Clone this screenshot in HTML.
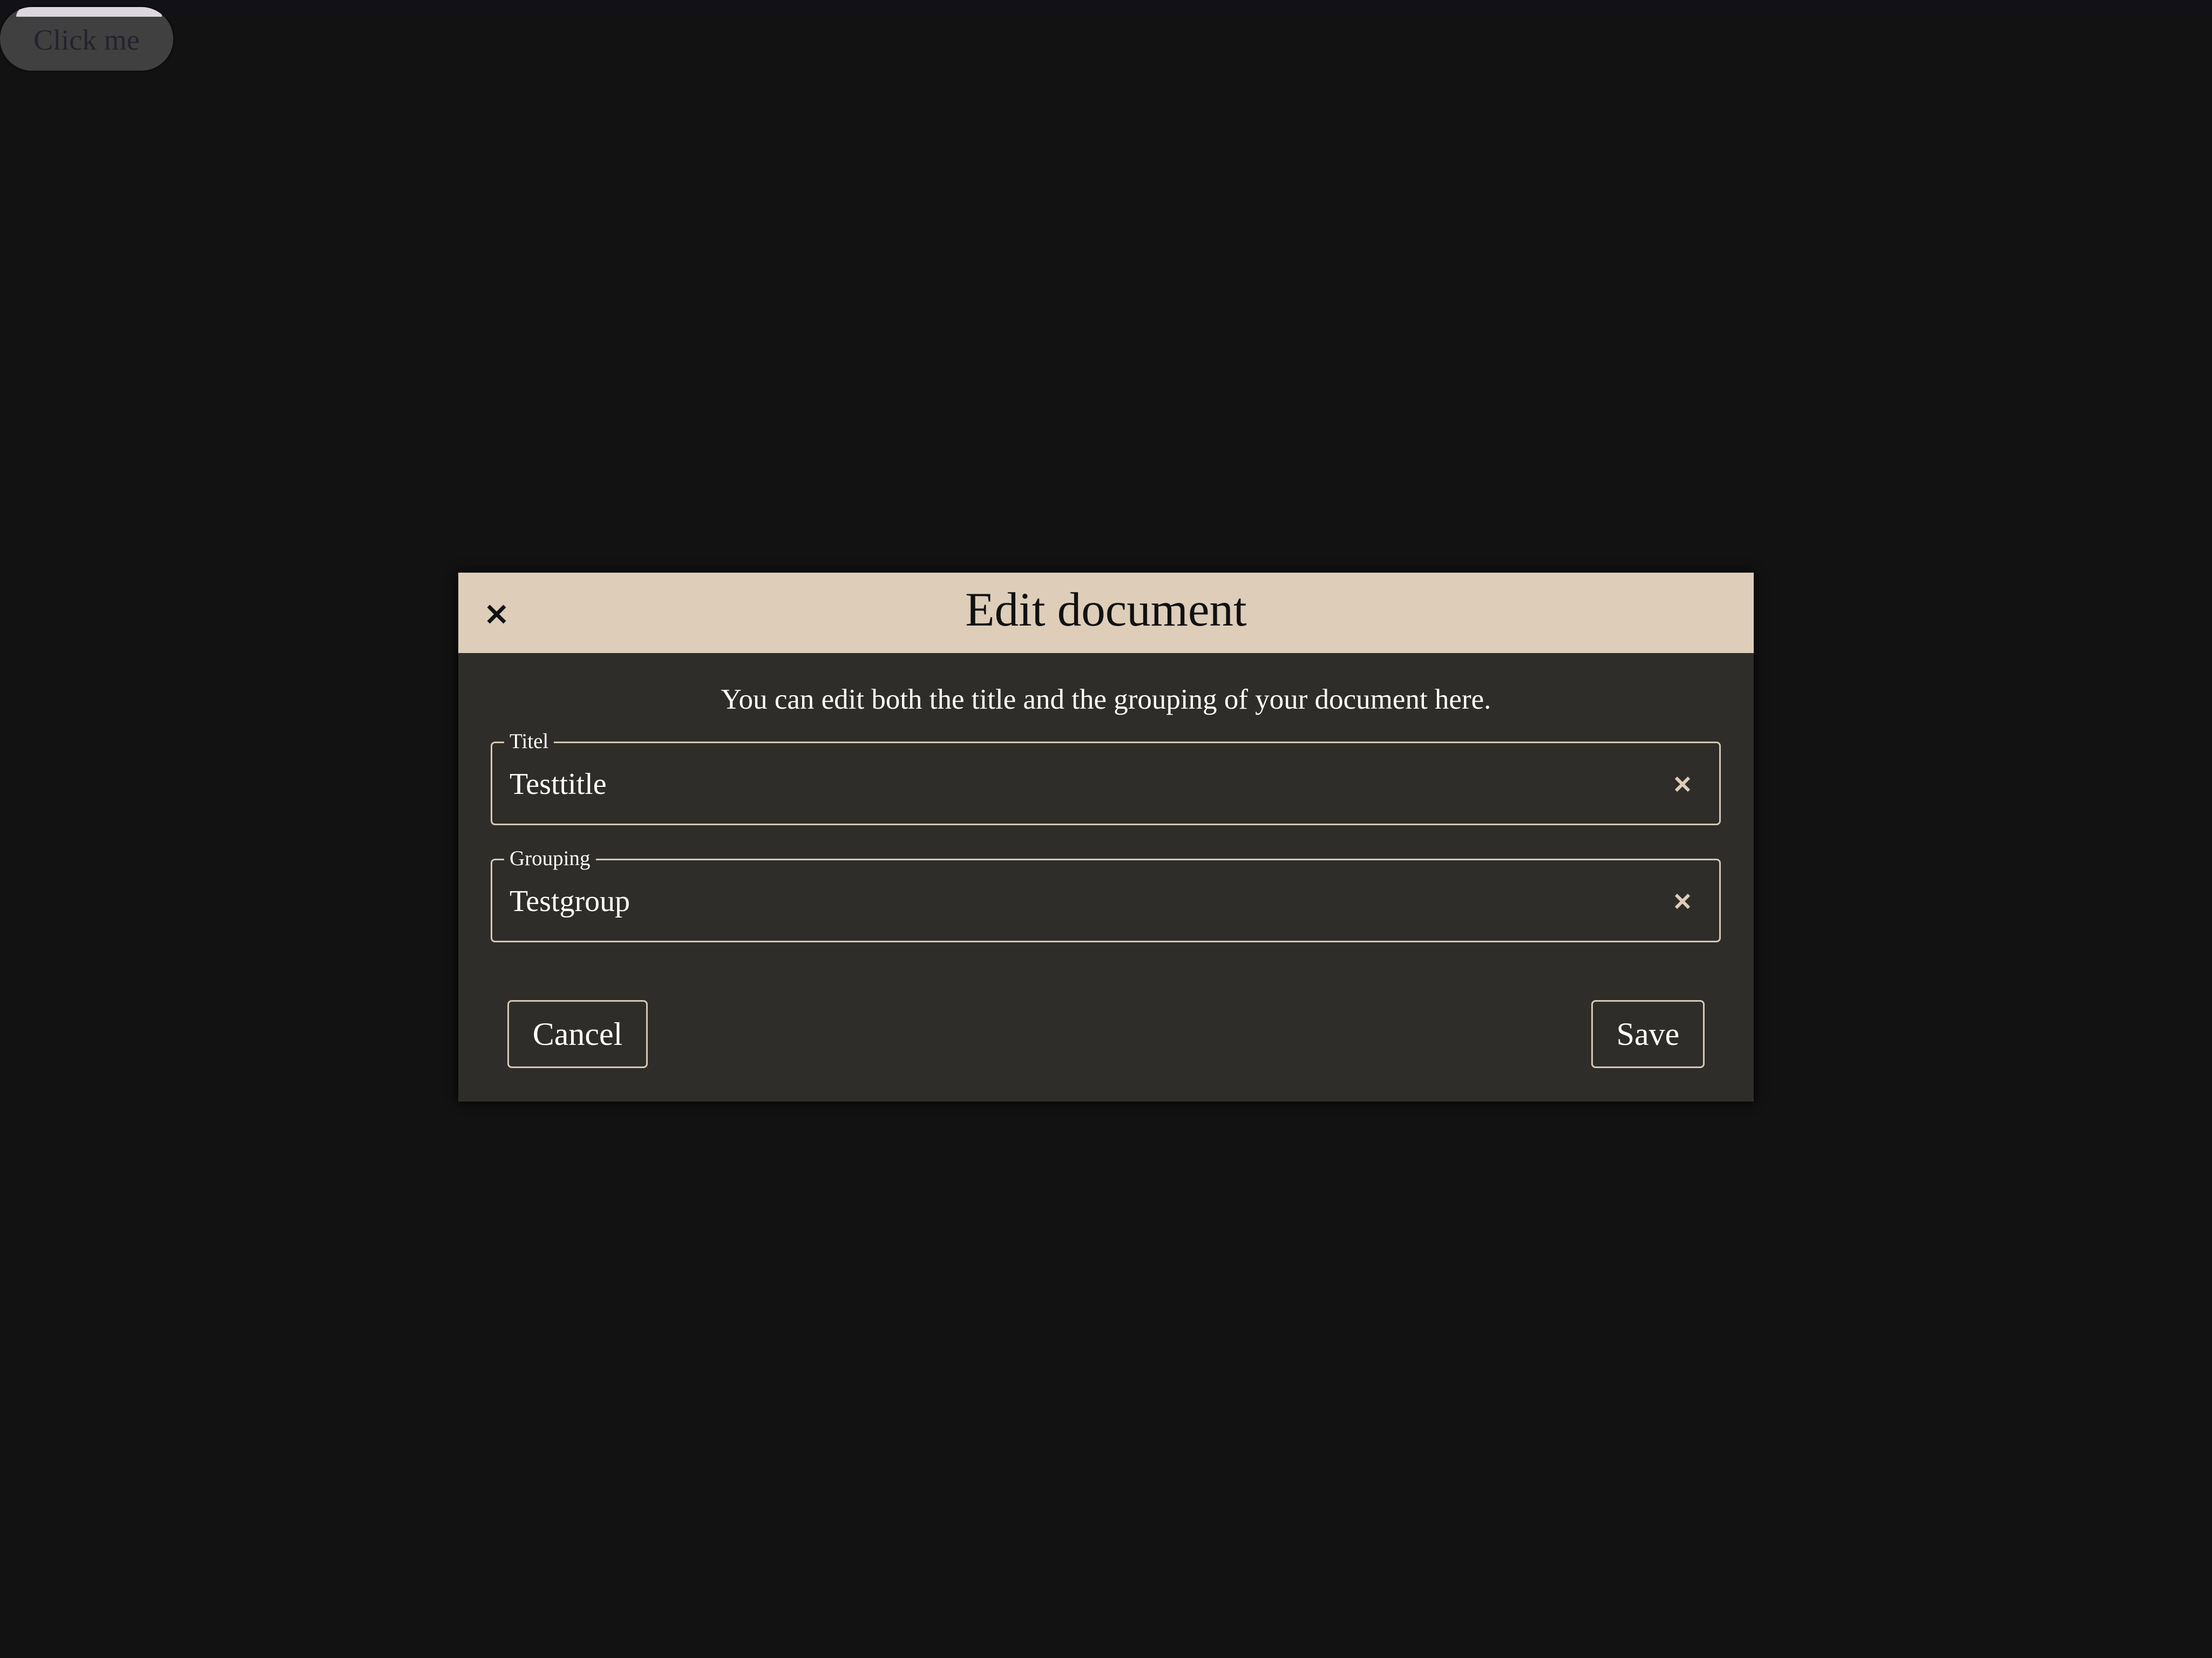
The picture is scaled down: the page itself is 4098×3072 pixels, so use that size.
<!DOCTYPE html>
<html><head><style>
html,body{margin:0;padding:0;width:4098px;height:3072px;background:#121212;overflow:hidden;font-family:"Liberation Serif","DejaVu Serif",serif;}
.top{position:absolute;left:0;top:0;width:4098px;height:30px;background:#121118;}
.click{position:absolute;left:0;top:13px;width:321px;height:118px;border-radius:59px;background:#404040;overflow:hidden;box-shadow:0 0 4px #000;}
.click:before{content:"";position:absolute;left:30px;top:0;width:270px;height:18px;background:#dcd6de;border-radius:40px 40px 0 0;}
.click span{position:absolute;left:0;right:0;top:30px;text-align:center;font-size:54px;color:#25222e;}
.dlg{position:absolute;left:849px;top:1061px;width:2400px;height:980px;background:#2f2d29;box-shadow:0 0 20px #000;}
.hd{position:absolute;left:0;top:0;width:2400px;height:149px;background:#ddcdb9;}
.hd h1{margin:0;position:absolute;left:0;right:0;top:18px;text-align:center;font-weight:normal;font-size:89px;color:#111;}
.desc{position:absolute;left:0;right:0;top:1266px;text-align:center;color:#fff;font-size:53px;}
.f{position:absolute;left:909px;width:2279px;height:155px;border:3px solid #d5c8b6;border-radius:8px;box-sizing:border-box;}
.f .lb{position:absolute;left:22px;top:-26px;background:#2f2d29;padding:0 10px;color:#fff;font-size:39px;}
.f .v{position:absolute;left:32px;top:44px;color:#fff;font-size:56px;}
.btn{position:absolute;top:1853px;height:126px;border:3px solid #d5c8b6;border-radius:8px;box-sizing:border-box;color:#fff;font-size:60px;text-align:center;line-height:120px;}
</style></head><body>
<div class="top"></div>
<div class="click"><span>Click me</span></div>
<div class="dlg"><div class="hd"><h1>Edit document</h1>
<svg style="position:absolute;left:50px;top:56px" width="42" height="42" viewBox="0 0 42 42"><path d="M6 6L36 36M36 6L6 36" stroke="#111" stroke-width="7"/></svg></div></div>
<div class="desc">You can edit both the title and the grouping of your document here.</div>
<div class="f" style="top:1374px"><span class="lb">Titel</span><span class="v">Testtitle</span>
<svg style="position:absolute;right:52px;top:60px" width="32" height="32" viewBox="0 0 32 32"><path d="M4 4L28 28M28 4L4 28" stroke="#ddcdb9" stroke-width="6"/></svg></div>
<div class="f" style="top:1591px"><span class="lb">Grouping</span><span class="v">Testgroup</span>
<svg style="position:absolute;right:52px;top:60px" width="32" height="32" viewBox="0 0 32 32"><path d="M4 4L28 28M28 4L4 28" stroke="#ddcdb9" stroke-width="6"/></svg></div>
<div class="btn" style="left:940px;width:260px">Cancel</div>
<div class="btn" style="left:2948px;width:210px">Save</div>
</body></html>
